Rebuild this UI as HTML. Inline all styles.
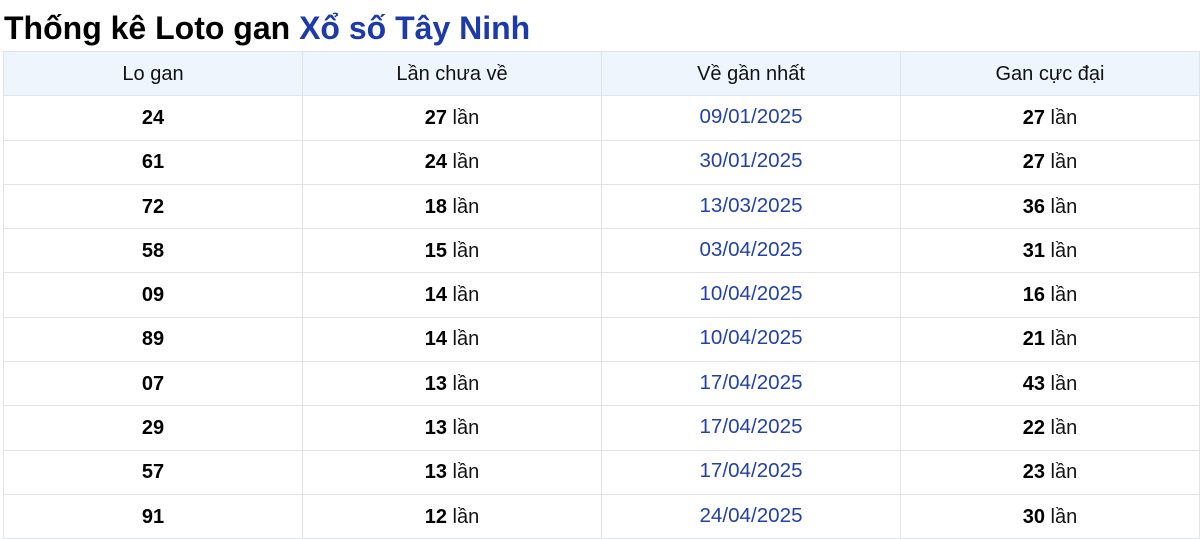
<!DOCTYPE html>
<html><head><meta charset="utf-8"><style>
body{margin:0;background:#fff;font-family:"Liberation Sans",Arial,sans-serif;width:1200px;height:537px;overflow:hidden}
h1{margin:0;position:absolute;left:4px;top:10px;font-size:32px;font-weight:bold;color:#000;line-height:36px}
h1 span{color:#1c3aa9}
table{position:absolute;left:3px;top:51px;width:1197px;border-collapse:collapse;table-layout:fixed}
td,th{border:1px solid #e0e3e8;text-align:center;font-size:20px;height:43.3px;padding:0;color:#111;line-height:22px}
th{background:#eef5fd;font-weight:normal}
td b{color:#000}
td.d{color:#2342a8;font-size:20.6px}
td.d span{position:relative;top:-1px}
</style></head><body>
<h1>Thống kê Loto gan <span>Xổ số Tây Ninh</span></h1>
<table>
<tr><th>Lo gan</th><th>Lần chưa về</th><th>Về gần nhất</th><th>Gan cực đại</th></tr>
<tr><td><b>24</b></td><td><b>27</b> lần</td><td class="d"><span>09/01/2025</span></td><td><b>27</b> lần</td></tr>
<tr><td><b>61</b></td><td><b>24</b> lần</td><td class="d"><span>30/01/2025</span></td><td><b>27</b> lần</td></tr>
<tr><td><b>72</b></td><td><b>18</b> lần</td><td class="d"><span>13/03/2025</span></td><td><b>36</b> lần</td></tr>
<tr><td><b>58</b></td><td><b>15</b> lần</td><td class="d"><span>03/04/2025</span></td><td><b>31</b> lần</td></tr>
<tr><td><b>09</b></td><td><b>14</b> lần</td><td class="d"><span>10/04/2025</span></td><td><b>16</b> lần</td></tr>
<tr><td><b>89</b></td><td><b>14</b> lần</td><td class="d"><span>10/04/2025</span></td><td><b>21</b> lần</td></tr>
<tr><td><b>07</b></td><td><b>13</b> lần</td><td class="d"><span>17/04/2025</span></td><td><b>43</b> lần</td></tr>
<tr><td><b>29</b></td><td><b>13</b> lần</td><td class="d"><span>17/04/2025</span></td><td><b>22</b> lần</td></tr>
<tr><td><b>57</b></td><td><b>13</b> lần</td><td class="d"><span>17/04/2025</span></td><td><b>23</b> lần</td></tr>
<tr><td><b>91</b></td><td><b>12</b> lần</td><td class="d"><span>24/04/2025</span></td><td><b>30</b> lần</td></tr>
</table>
</body></html>
